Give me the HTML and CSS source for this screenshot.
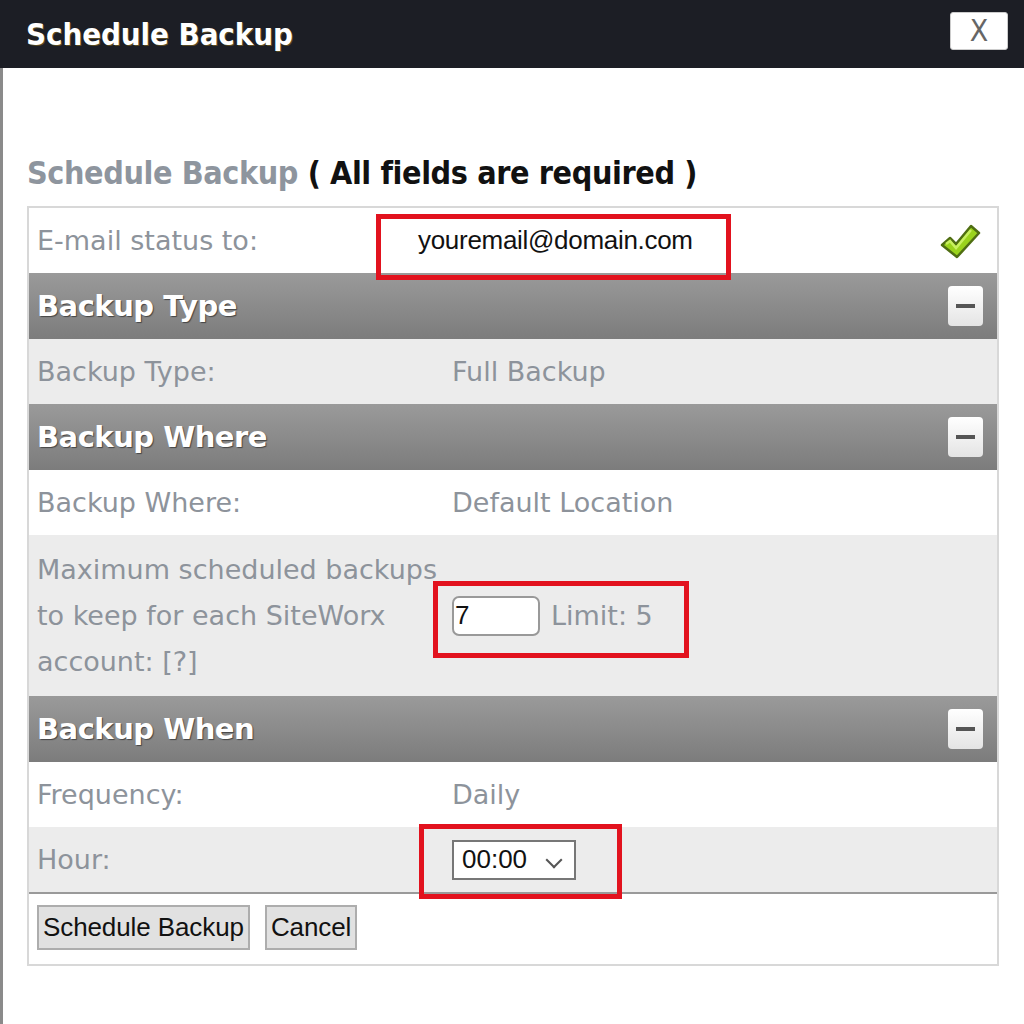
FILE: index.html
```html
<!DOCTYPE html>
<html lang="en">
<head>
  <meta charset="UTF-8" />
  <title>Schedule Backup</title>
  <link rel="stylesheet" href="styles.css">
</head>
<body>
  <div class="dialog">
    <div class="titlebar">
      <span class="title">Schedule Backup</span>
      <button class="close" type="button">X</button>
    </div>

    <div class="content">
      <h2 class="heading"><span class="muted">Schedule Backup</span> ( All fields are required )</h2>

      <div class="form-table">
        <div class="row white">
          <div class="label">E-mail status to:</div>
          <div class="value">
            <span class="email">youremail@domain.com</span>
            <span class="mark mark-email"></span>
            <svg class="check" width="42" height="38" viewBox="0 0 42 38">
              <path d="M3 22 L11 15 L17 21 L32 3 L40 10 L18 34 Z" fill="#9ad31c" stroke="#4f6e12" stroke-width="2.5" stroke-linejoin="round"/>
              <path d="M7 21 L11 18 L17 25 L32 7" fill="none" stroke="#c8f060" stroke-width="2.5"/>
            </svg>
          </div>
        </div>

        <div class="section">
          <span>Backup Type</span>
          <span class="toggle"></span>
        </div>
        <div class="row grey">
          <div class="label">Backup Type:</div>
          <div class="value">Full Backup</div>
        </div>

        <div class="section">
          <span>Backup Where</span>
          <span class="toggle"></span>
        </div>
        <div class="row white">
          <div class="label">Backup Where:</div>
          <div class="value">Default Location</div>
        </div>
        <div class="row grey tall">
          <div class="label">Maximum scheduled backups to keep for each SiteWorx account: [?]</div>
          <div class="value">
            <input class="num" type="text" value="7">
            <span class="limit">Limit: 5</span>
            <span class="mark mark-limit"></span>
          </div>
        </div>

        <div class="section">
          <span>Backup When</span>
          <span class="toggle"></span>
        </div>
        <div class="row white">
          <div class="label">Frequency:</div>
          <div class="value">Daily</div>
        </div>
        <div class="row grey last">
          <div class="label">Hour:</div>
          <div class="value">
            <div class="select">00:00 <span class="caret"></span></div>
            <span class="mark mark-hour"></span>
          </div>
        </div>

        <div class="actions">
          <button class="btn" type="button">Schedule Backup</button>
          <button class="btn" type="button">Cancel</button>
        </div>
      </div>
    </div>
  </div>
</body>
</html>
```

FILE: styles.css
```css
body {
  margin: 0;
  background-color: #fff;
  font-family: "DejaVu Sans", Verdana, sans-serif;
}

.dialog {
  width: 1024px;
  height: 1024px;
  border-left: 3px solid #8a8a8a;
  box-sizing: border-box;
}

.titlebar {
  height: 68px;
  background-color: #1c1e25;
  display: flex;
  align-items: center;
  justify-content: space-between;
  padding: 0 16px 0 26px;
  margin-left: -3px;
}

.title {
  font-family: "DejaVu Sans Condensed", "DejaVu Sans", sans-serif;
  font-weight: bold;
  font-size: 31px;
  color: #fff;
  letter-spacing: -0.1px;
  text-shadow: 1px 1px 0 #5a4a20;
}

.close {
  width: 58px;
  height: 38px;
  margin-top: -6px;
  background: #fff;
  border: 1px solid #ccc;
  border-radius: 3px;
  font-family: "DejaVu Sans Condensed", sans-serif;
  font-size: 30px;
  color: #666;
  padding: 0;
  line-height: 36px;
}

.content {
  padding: 86px 24px 0 24px;
}

.heading {
  margin: 0 0 14px 0;
  font-family: "DejaVu Sans Condensed", "DejaVu Sans", sans-serif;
  font-size: 32px;
  font-weight: bold;
  color: #111;
  letter-spacing: -0.4px;
}

.heading .muted {
  color: #8e959e;
}

.form-table {
  border: 2px solid #d8d8d8;
  width: 972px;
  box-sizing: border-box;
}

.row {
  display: flex;
  min-height: 65px;
  font-size: 27px;
  color: #8d939b;
}

.row.white {
  background-color: #fff;
}

.row.grey {
  background-color: #ececec;
}

.row.tall {
  min-height: 161px;
}

.row.last {
  border-bottom: 2px solid #9a9a9a;
}

.label {
  width: 407px;
  padding-left: 8px;
  line-height: 46px;
  align-self: center;
}

.value {
  flex: 1;
  padding-left: 8px;
  position: relative;
  display: flex;
  align-items: center;
}

.email {
  font-family: "Liberation Sans", Arial, sans-serif;
  font-size: 26px;
  color: #111;
  letter-spacing: -0.3px;
  margin-left: -34px;
}

.check {
  position: absolute;
  right: 16px;
  top: 15px;
}

.mark {
  position: absolute;
  border: 5px solid #e2121e;
}

.mark-email {
  left: -68px;
  top: 6px;
  width: 345px;
  height: 56px;
}

.mark-limit {
  left: -11px;
  top: 46px;
  width: 246px;
  height: 67px;
}

.mark-hour {
  left: -25px;
  top: -3px;
  width: 193px;
  height: 65px;
}

.section {
  height: 66px;
  display: flex;
  align-items: center;
  justify-content: space-between;
  padding: 0 14px 0 8px;
  background: linear-gradient(#9a9a9a, #7c7c7c);
  color: #fff;
  font-weight: bold;
  font-size: 29px;
  letter-spacing: -0.5px;
  text-shadow: 1px 1px 1px #444;
}

.toggle {
  width: 35px;
  height: 40px;
  background: linear-gradient(#fff, #e4e4e4);
  border-radius: 4px;
  position: relative;
}

.toggle::after {
  content: "";
  position: absolute;
  left: 8px;
  right: 8px;
  top: 18px;
  height: 4px;
  background-color: #555;
}

.num {
  width: 88px;
  height: 40px;
  box-sizing: border-box;
  border: 2px solid #999;
  border-radius: 7px;
  font-family: "Liberation Sans", Arial, sans-serif;
  font-size: 26px;
  padding: 0 1px;
  color: #111;
}

.limit {
  margin-left: 11px;
}

.select {
  width: 124px;
  height: 40px;
  box-sizing: border-box;
  border: 2px solid #777;
  background-color: #fff;
  font-family: "Liberation Sans", Arial, sans-serif;
  font-size: 26px;
  color: #111;
  padding: 2px 8px;
  position: relative;
}

.caret {
  position: absolute;
  right: 14px;
  top: 12px;
  width: 10px;
  height: 10px;
  border-right: 2px solid #555;
  border-bottom: 2px solid #555;
  transform: rotate(45deg);
}

.actions {
  display: flex;
  gap: 15px;
  padding: 11px 10px 14px 8px;
  background-color: #fff;
}

.btn {
  height: 45px;
  padding: 0 4px;
  background-color: #e1e1e1;
  border: 2px solid #adadad;
  font-family: "Liberation Sans", Arial, sans-serif;
  font-size: 26px;
  letter-spacing: -0.1px;
  color: #111;
}
```
